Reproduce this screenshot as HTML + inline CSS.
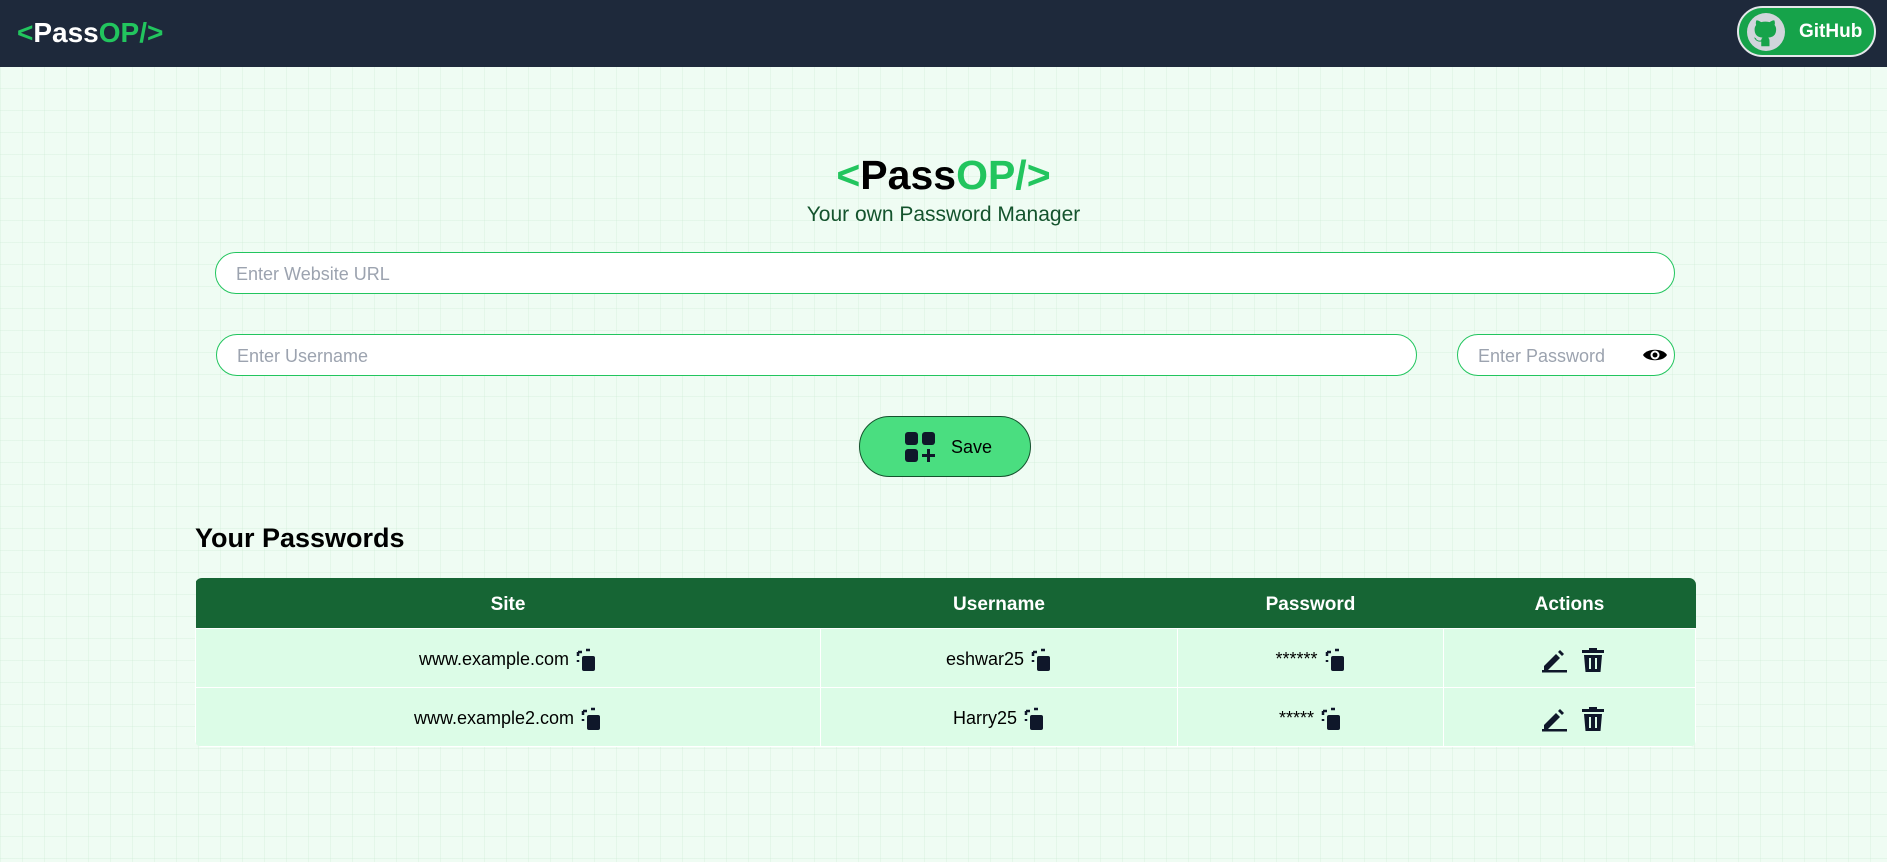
<!DOCTYPE html>
<html><head><meta charset="utf-8"><style>
*{box-sizing:border-box;margin:0;padding:0}
body{width:1887px;height:862px;overflow:hidden;font-family:"Liberation Sans",sans-serif;background-color:#effcf3;
background-image:linear-gradient(to right,rgba(180,220,190,.18) 1px,transparent 1px),linear-gradient(to bottom,rgba(180,220,190,.18) 1px,transparent 1px);background-size:22px 22px;position:relative}
nav{position:absolute;left:0;top:0;width:1887px;height:67px;background:#1e293b}
.logo{position:absolute;left:17px;top:17px;font-size:28px;font-weight:bold;color:#fff;letter-spacing:0}
.g{color:#22c55e}
.gh{position:absolute;left:1737px;top:6px;width:139px;height:51px;border-radius:26px;background:#16a34a;border:2px solid #e5e7eb;color:#fff;font-weight:bold;font-size:19px}
.gh svg{position:absolute;left:8px;top:5px}
.gh span{position:absolute;left:60px;top:13px}
.title{position:absolute;left:0;width:1887px;text-align:center;top:152px;font-size:41px;font-weight:bold;color:#000}
.sub{position:absolute;left:0;width:1887px;text-align:center;top:203px;font-size:21px;color:#14532d}
.in{position:absolute;background:#fff;border:1px solid #22c55e;border-radius:22px;height:42px;color:#9ca3af;font-size:18px;padding:11px 0 0 20px}
.save{position:absolute;left:859px;top:416px;width:172px;height:61px;border-radius:31px;background:#4ade80;border:1px solid #14532d;font-size:18px;color:#000}
.save span{position:absolute;left:91px;top:20px}
.save svg{position:absolute;left:44px;top:14px}
h2{position:absolute;left:195px;top:523px;font-size:27px;font-weight:bold}
table{position:absolute;left:195px;top:578px;width:1501px;border-collapse:collapse;border-radius:7px;overflow:hidden}
th{background:#166534;color:#fff;font-size:19px;height:50px;font-weight:bold;padding-top:4px}
td{background:#dcfce7;border:1px solid #fff;height:59px;text-align:center;font-size:18px;color:#000;padding-top:4px}
td svg{vertical-align:middle;margin-left:6px}
</style></head><body>
<nav><div class="logo"><span class="g">&lt;</span>Pass<span class="g">OP/&gt;</span></div>
<div class="gh"><svg width="38" height="38" viewBox="0 0 24 24"><circle cx="12" cy="12" r="12" fill="#d1d5db"/><path fill="#16a34a" d="M9 21v-3c-3 .5-4-1.5-4.5-2.5 0 0 1 0 1.5 1.2 1 1 2.5.8 3 .5 0-.7.3-1.3.8-1.6-2.7-.3-5-1.3-5-5.3 0-1.1.4-2 1-2.8-.2-.4-.4-1.4.1-2.8 0 0 1-.3 3 1.1a10 10 0 015.4 0c2-1.4 3-1.1 3-1.1.5 1.4.3 2.4.1 2.8.6.8 1 1.7 1 2.8 0 4-2.3 5-5 5.3.5.4.8 1.1.8 2V21z"/></svg><span>GitHub</span></div></nav>
<div class="title"><span class="g">&lt;</span>Pass<span class="g">OP/&gt;</span></div>
<div class="sub">Your own Password Manager</div>
<div class="in" style="left:215px;top:252px;width:1460px">Enter Website URL</div>
<div class="in" style="left:216px;top:334px;width:1201px">Enter Username</div>
<div class="in" style="left:1457px;top:334px;width:218px">Enter Password
<svg style="position:absolute;left:184px;top:11px" width="26" height="18" viewBox="0 0 26 18"><path d="M1 9C5 2 21 2 25 9 21 16 5 16 1 9z" fill="#000"/><circle cx="13" cy="9" r="4.5" fill="#fff"/><circle cx="13" cy="9" r="2.5" fill="#000"/></svg></div>
<div class="save"><svg width="32" height="32" viewBox="0 0 32 32" fill="#0f172a"><rect x="1" y="1" width="13" height="13" rx="3"/><rect x="18" y="1" width="13" height="13" rx="3"/><rect x="1" y="18" width="13" height="13" rx="3"/><path d="M23 18h3v5h5v3h-5v5h-3v-5h-5v-3h5z"/></svg><span>Save</span></div>
<h2>Your Passwords</h2>
<table>
<tr><th style="width:625px">Site</th><th style="width:357px">Username</th><th style="width:266px">Password</th><th>Actions</th></tr>
<tr><td>www.example.com<svg width="22" height="24" viewBox="0 0 22 24"><path d="M3 4h4M3 4v4M3 12v2" stroke="#0f172a" stroke-width="2.5" fill="none"/><path d="M11 2h4" stroke="#0f172a" stroke-width="2.5"/><rect x="7" y="8" width="13" height="15" rx="2" fill="#0f172a"/></svg></td><td>eshwar25<svg width="22" height="24" viewBox="0 0 22 24"><path d="M3 4h4M3 4v4M3 12v2" stroke="#0f172a" stroke-width="2.5" fill="none"/><path d="M11 2h4" stroke="#0f172a" stroke-width="2.5"/><rect x="7" y="8" width="13" height="15" rx="2" fill="#0f172a"/></svg></td><td>******<svg width="22" height="24" viewBox="0 0 22 24"><path d="M3 4h4M3 4v4M3 12v2" stroke="#0f172a" stroke-width="2.5" fill="none"/><path d="M11 2h4" stroke="#0f172a" stroke-width="2.5"/><rect x="7" y="8" width="13" height="15" rx="2" fill="#0f172a"/></svg></td><td><svg width="28" height="26" viewBox="0 0 28 26"><path d="M3 19l12-12 4 4-12 12H3z" fill="#0f172a"/><path d="M17 5l2-2 4 4-2 2z" fill="#0f172a"/><rect x="1" y="23" width="25" height="2.5" fill="#0f172a"/></svg><svg width="24" height="26" viewBox="0 0 24 26" style="margin-left:12px"><path d="M8 1h8v2h7v3H1V3h7z" fill="#0f172a"/><path d="M3 8h18l-1.5 17h-15z" fill="#0f172a"/><path d="M9 11v11M15 11v11" stroke="#dcfce7" stroke-width="2"/></svg></td></tr>
<tr><td>www.example2.com<svg width="22" height="24" viewBox="0 0 22 24"><path d="M3 4h4M3 4v4M3 12v2" stroke="#0f172a" stroke-width="2.5" fill="none"/><path d="M11 2h4" stroke="#0f172a" stroke-width="2.5"/><rect x="7" y="8" width="13" height="15" rx="2" fill="#0f172a"/></svg></td><td>Harry25<svg width="22" height="24" viewBox="0 0 22 24"><path d="M3 4h4M3 4v4M3 12v2" stroke="#0f172a" stroke-width="2.5" fill="none"/><path d="M11 2h4" stroke="#0f172a" stroke-width="2.5"/><rect x="7" y="8" width="13" height="15" rx="2" fill="#0f172a"/></svg></td><td>*****<svg width="22" height="24" viewBox="0 0 22 24"><path d="M3 4h4M3 4v4M3 12v2" stroke="#0f172a" stroke-width="2.5" fill="none"/><path d="M11 2h4" stroke="#0f172a" stroke-width="2.5"/><rect x="7" y="8" width="13" height="15" rx="2" fill="#0f172a"/></svg></td><td><svg width="28" height="26" viewBox="0 0 28 26"><path d="M3 19l12-12 4 4-12 12H3z" fill="#0f172a"/><path d="M17 5l2-2 4 4-2 2z" fill="#0f172a"/><rect x="1" y="23" width="25" height="2.5" fill="#0f172a"/></svg><svg width="24" height="26" viewBox="0 0 24 26" style="margin-left:12px"><path d="M8 1h8v2h7v3H1V3h7z" fill="#0f172a"/><path d="M3 8h18l-1.5 17h-15z" fill="#0f172a"/><path d="M9 11v11M15 11v11" stroke="#dcfce7" stroke-width="2"/></svg></td></tr>
</table>
</body></html>
